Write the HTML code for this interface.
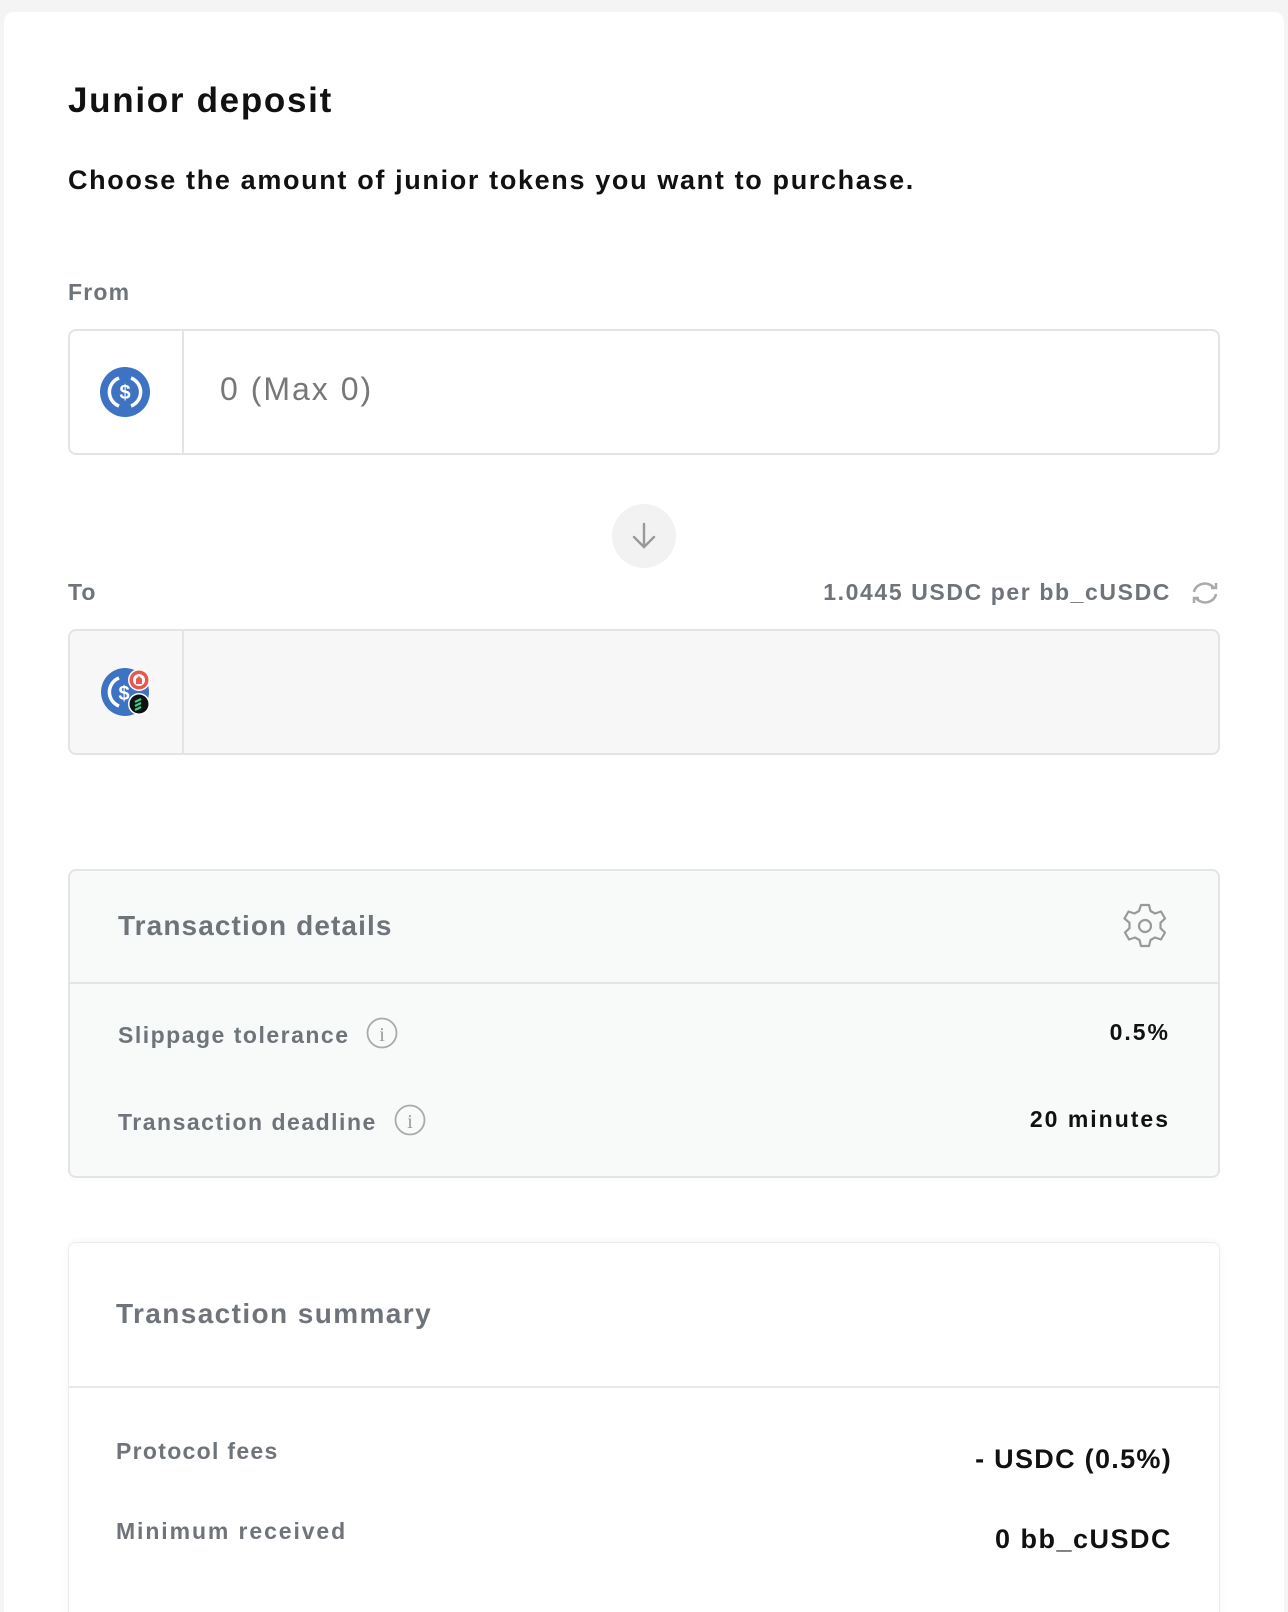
<!DOCTYPE html>
<html><head><meta charset="utf-8"><style>
*{margin:0;padding:0;box-sizing:border-box}
html,body{width:1288px;height:1612px;overflow:hidden}
body{background:#f4f4f4;font-family:"Liberation Sans",sans-serif;position:relative}
.card{position:absolute;left:4px;top:12px;width:1280px;height:1600px;background:#fff;border-radius:10px 10px 0 0}
.t{position:absolute;white-space:nowrap;line-height:1}
.box{position:absolute;left:68px;width:1152px;border:2px solid #e4e4e4;border-radius:8px}
.gray{color:#6e747a}
</style></head><body>
<div class="card"></div>
<div class="t" style="left:68px;top:83px;font-size:35px;font-weight:bold;color:#111;letter-spacing:1.7px">Junior deposit</div>
<div class="t" style="left:68px;top:167px;font-size:27px;font-weight:bold;color:#111;letter-spacing:1.65px">Choose the amount of junior tokens you want to purchase.</div>
<div class="t gray" style="left:68px;top:281px;font-size:23px;font-weight:bold;letter-spacing:1.2px">From</div>
<div class="box" style="top:329px;height:126px;background:#fff"></div>
<div style="position:absolute;left:182px;top:331px;width:2px;height:122px;background:#e4e4e4"></div>
<svg style="position:absolute;left:100px;top:367px" width="50" height="50" viewBox="0 0 50 50"><circle cx="25" cy="25" r="25" fill="#3e73c4"/><path d="M19 11a15 15 0 0 0 0 28M31 11a15 15 0 0 1 0 28" stroke="#fff" stroke-width="3.5" fill="none"/><text x="25" y="32" text-anchor="middle" font-size="20" font-weight="bold" fill="#fff" font-family="Liberation Sans">$</text></svg>
<div class="t" style="left:220px;top:373px;font-size:32px;color:#777;letter-spacing:2px">0 (Max 0)</div>
<div style="position:absolute;left:612px;top:504px;width:64px;height:64px;border-radius:50%;background:#f2f2f2"></div>
<svg style="position:absolute;left:628px;top:520px" width="32" height="32" viewBox="0 0 32 32"><path d="M16 4v23M6 17l10 10 10-10" stroke="#999" stroke-width="2.4" fill="none" stroke-linecap="round"/></svg>
<div class="t gray" style="left:68px;top:581px;font-size:23px;font-weight:bold;letter-spacing:1px">To</div>
<div class="t gray" style="right:117px;top:581px;font-size:23px;font-weight:bold;letter-spacing:1.6px">1.0445 USDC per bb_cUSDC</div>
<svg style="position:absolute;left:1189px;top:579px" width="32" height="28" viewBox="0 0 32 28"><path d="M5 13a11 10 0 0 1 20-4M27 15a11 10 0 0 1-20 4" stroke="#aaa" stroke-width="2.5" fill="none"/><path d="M22 9h5V4M10 19H5v5" stroke="#aaa" stroke-width="2.5" fill="none"/></svg>
<div class="box" style="top:629px;height:126px;background:#f7f7f7"></div>
<div style="position:absolute;left:182px;top:631px;width:2px;height:122px;background:#e4e4e4"></div>
<svg style="position:absolute;left:100px;top:665px" width="54" height="54" viewBox="0 0 54 54"><circle cx="25" cy="27" r="24" fill="#3e73c4"/><path d="M19 13a15 15 0 0 0 0 28" stroke="#fff" stroke-width="3.5" fill="none"/><text x="24" y="35" text-anchor="middle" font-size="20" font-weight="bold" fill="#fff" font-family="Liberation Sans">$</text><circle cx="39" cy="15" r="11" fill="#fff"/><circle cx="39" cy="15" r="9.5" fill="#e9564a"/><circle cx="39" cy="15" r="6" fill="#fff"/><path d="M36 19v-5l3-3 3 3v5z" fill="#e9564a"/><circle cx="39" cy="39" r="11" fill="#fff"/><circle cx="39" cy="39" r="9.5" fill="#111"/><path d="M35 41l6-3M35 37l6-3M35 45l6-3" stroke="#2fd38a" stroke-width="2.2"/></svg>
<div class="box" style="top:869px;height:309px;background:#f8f9f9"></div>
<div style="position:absolute;left:70px;top:982px;width:1148px;height:2px;background:#e4e4e4"></div>
<div class="t gray" style="left:118px;top:912px;font-size:28px;font-weight:bold;letter-spacing:1.1px">Transaction details</div>
<svg style="position:absolute;left:1121px;top:902px" width="48" height="48" viewBox="0 0 48 48"><path d="M20 3h8l1.5 6 4.5 2.5 6-2 4 7-4.5 4.3v5.4l4.5 4.3-4 7-6-2-4.5 2.5-1.5 6h-8l-1.5-6-4.5-2.5-6 2-4-7 4.5-4.3v-5.4L3.5 16.5l4-7 6 2L18 9z" stroke="#999" stroke-width="2.2" fill="none" stroke-linejoin="round"/><circle cx="24" cy="24" r="6" stroke="#999" stroke-width="2.2" fill="none"/></svg>
<div class="t gray" style="left:118px;top:1024px;font-size:23px;font-weight:bold;letter-spacing:1.5px">Slippage tolerance</div>
<svg style="position:absolute;left:366px;top:1017px" width="32" height="32"><circle cx="16" cy="16" r="14.5" stroke="#aaa" stroke-width="1.8" fill="none"/><text x="16" y="24" text-anchor="middle" font-size="20" fill="#999" font-family="Liberation Serif">i</text></svg>
<div class="t" style="right:118px;top:1021px;font-size:23px;font-weight:bold;color:#111;letter-spacing:2px">0.5%</div>
<div class="t gray" style="left:118px;top:1111px;font-size:23px;font-weight:bold;letter-spacing:1.5px">Transaction deadline</div>
<svg style="position:absolute;left:394px;top:1104px" width="32" height="32"><circle cx="16" cy="16" r="14.5" stroke="#aaa" stroke-width="1.8" fill="none"/><text x="16" y="24" text-anchor="middle" font-size="20" fill="#999" font-family="Liberation Serif">i</text></svg>
<div class="t" style="right:118px;top:1108px;font-size:23px;font-weight:bold;color:#111;letter-spacing:2px">20 minutes</div>
<div style="position:absolute;left:68px;top:1242px;width:1152px;height:380px;background:#fff;border:1px solid #ececec;border-radius:8px;box-shadow:0 0 8px rgba(0,0,0,.05)"></div>
<div style="position:absolute;left:69px;top:1386px;width:1150px;height:2px;background:#e8e8e8"></div>
<div class="t gray" style="left:116px;top:1300px;font-size:28px;font-weight:bold;letter-spacing:1.4px">Transaction summary</div>
<div class="t gray" style="left:116px;top:1440px;font-size:23px;font-weight:bold;letter-spacing:1.3px">Protocol fees</div>
<div class="t" style="right:116px;top:1446px;font-size:27px;font-weight:bold;color:#111;letter-spacing:1.3px">- USDC (0.5%)</div>
<div class="t gray" style="left:116px;top:1520px;font-size:23px;font-weight:bold;letter-spacing:1.9px">Minimum received</div>
<div class="t" style="right:116px;top:1526px;font-size:27px;font-weight:bold;color:#111;letter-spacing:1.5px">0 bb_cUSDC</div>
</body></html>
